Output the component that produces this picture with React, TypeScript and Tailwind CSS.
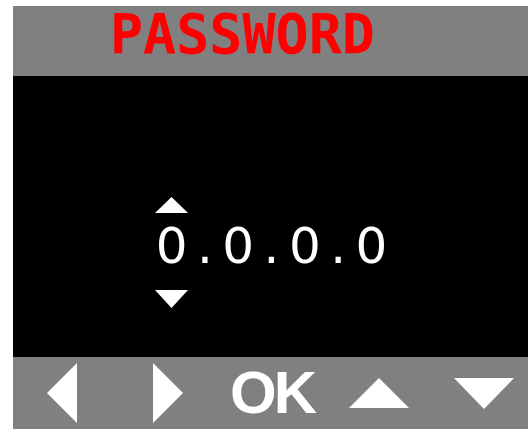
import React from 'react'

// Solid white triangles used for the on-screen key hints
const Tri: React.FC<{ dir: 'up' | 'down' | 'left' | 'right'; w: number; h: number; className?: string }> = ({ dir, w, h, className }) => {
  const pts = {
    up: `0,${h} ${w / 2},0 ${w},${h}`,
    down: `0,0 ${w},0 ${w / 2},${h}`,
    left: `${w},0 0,${h / 2} ${w},${h}`,
    right: `0,0 ${w},${h / 2} 0,${h}`,
  }[dir]
  return (
    <svg width={w} height={h} viewBox={`0 0 ${w} ${h}`} className={className}>
      <polygon points={pts} fill="#ffffff" />
    </svg>
  )
}

const code = '0.0.0.0'

export default function App() {
  return (
    <div className="w-[528px] h-[429px] bg-white pl-[13px] pt-[6px] overflow-hidden">
      <div className="flex flex-col h-full">
        {/* title bar */}
        <div className="h-[70px] bg-[#808080] pl-[97px] pt-[1px]">
          <span className="text-[55px] leading-none font-bold text-[#ff0000] font-['DejaVu_Sans_Mono',monospace]">
            PASSWORD
          </span>
        </div>

        {/* code entry, one fixed cell per character */}
        <div className="flex-1 bg-black pl-[142px] pt-[121px]">
          <div className="flex flex-col items-start">
            <Tri dir="up" w={33} h={16} />
            <div className="mt-[8px] flex text-[50px] leading-none text-white font-['DejaVu_Sans',sans-serif]">
              {code.split('').map((c, i) => (
                <span key={i} className="w-[33.3px] text-center">
                  {c}
                </span>
              ))}
            </div>
            <Tri dir="down" w={33} h={18} className="mt-[19px]" />
          </div>
        </div>

        {/* key hints */}
        <div className="h-[72px] bg-[#808080] flex items-center pl-[34px]">
          <Tri dir="left" w={30} h={60} />
          <Tri dir="right" w={30} h={60} className="ml-[76px]" />
          <span className="ml-[47px] text-[60px] leading-none font-bold tracking-[-3px] text-white font-['Liberation_Sans',sans-serif]">
            OK
          </span>
          <Tri dir="up" w={60} h={30} className="ml-[35px]" />
          <Tri dir="down" w={60} h={31} className="ml-[45px]" />
        </div>
      </div>
    </div>
  )
}
